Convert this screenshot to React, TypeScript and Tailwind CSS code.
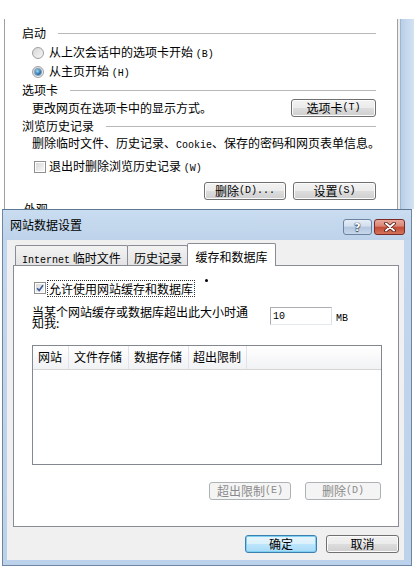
import type { ReactNode } from "react";

function M({ children }: { children: ReactNode }) {
  return <span className="font-['Liberation_Mono',monospace] text-[10px]">{children}</span>;
}

function Btn({
  children,
  className = "",
  disabled,
  primary,
}: {
  children: ReactNode;
  className?: string;
  disabled?: boolean;
  primary?: boolean;
}) {
  let look =
    "border-[#707070] bg-[linear-gradient(to_bottom,#f2f2f2_0%,#ebebeb_50%,#dddddd_50%,#cfcfcf_100%)] shadow-[inset_0_0_0_1px_#fbfbfb] text-black";
  if (disabled) look = "border-[#adb2b5] bg-[#f4f4f4] text-[#8a8a8a]";
  if (primary)
    look =
      "border-[#3c7fb1] bg-[linear-gradient(to_bottom,#e8f5fc_0%,#d9f0fc_50%,#bee6fd_50%,#a7d9f5_100%)] shadow-[inset_0_0_0_1px_#7ed0f2] text-black";
  return (
    <div
      className={`h-[18px] flex items-center justify-center rounded-[3px] border leading-none ${look} ${className}`}
    >
      {children}
    </div>
  );
}

function Radio({ checked }: { checked?: boolean }) {
  return (
    <span className="w-[12px] h-[12px] rounded-full border border-[#a0a0a0] bg-[linear-gradient(to_bottom_right,#d6d6d6,#f6f6f6)] flex items-center justify-center shrink-0">
      {checked && (
        <span className="w-[6px] h-[6px] rounded-full bg-[radial-gradient(circle_at_40%_35%,#a6dcf7,#2a6fa6_60%,#1c4a78)] shadow-[0_0_0_1px_#7da2c6]" />
      )}
    </span>
  );
}

function Check({ checked }: { checked?: boolean }) {
  return (
    <span className="w-[12px] h-[12px] border border-[#8f8f8f] bg-white p-[1px] shrink-0">
      <span className="block w-full h-full bg-[linear-gradient(to_bottom_right,#d9d9d9,#f7f7f7)] relative">
        {checked && (
          <svg viewBox="0 0 8 8" className="absolute inset-0 w-full h-full">
            <path d="M1 4.2 L3.2 6.4 L7 1.2" stroke="#3a5a9c" strokeWidth="1.6" fill="none" />
          </svg>
        )}
      </span>
    </span>
  );
}

function Group({ title }: { title: string }) {
  return (
    <div className="h-[18px] flex items-center gap-[12px]">
      <span className="leading-[18px] whitespace-nowrap">{title}</span>
      <span className="flex-1 h-px bg-[#b8b8b8]" />
    </div>
  );
}

export default function App() {
  return (
    <div className="w-[414px] h-[568px] overflow-hidden bg-white text-[12px] text-black font-['Noto_Sans_CJK_SC',sans-serif]">
      {/* Internet options window behind */}
      <div className="h-[209px] overflow-hidden pt-[19px] flex">
        <div className="w-[4px]" />
        <div className="w-[394px] border-l border-r border-[#a0a0a0] pl-[17px] pr-[21px] pt-[5px] flex flex-col">
          <Group title="启动" />
          <div className="h-[18px] mt-[2px] pl-[10px] flex items-center gap-[5px]">
            <Radio />
            <span className="leading-[18px] whitespace-nowrap">
              从上次会话中的选项卡开始 <M>(B)</M>
            </span>
          </div>
          <div className="h-[18px] mt-[1px] pl-[10px] flex items-center gap-[5px]">
            <Radio checked />
            <span className="leading-[18px] whitespace-nowrap">
              从主页开始 <M>(H)</M>
            </span>
          </div>
          <Group title="选项卡" />
          <div className="h-[19px] pl-[10px] flex items-center justify-between">
            <span className="leading-[18px] whitespace-nowrap">更改网页在选项卡中的显示方式。</span>
            <Btn className="w-[85px]">
              选项卡 <M>(T)</M>
            </Btn>
          </div>
          <Group title="浏览历史记录" />
          <div className="h-[18px] pl-[10px] flex items-center">
            <span className="leading-[18px] whitespace-nowrap">
              删除临时文件、历史记录、<M>Cookie</M>、保存的密码和网页表单信息。
            </span>
          </div>
          <div className="h-[18px] mt-[5px] pl-[12px] flex items-center gap-[3px]">
            <Check />
            <span className="leading-[18px] whitespace-nowrap">
              退出时删除浏览历史记录 <M>(W)</M>
            </span>
          </div>
          <div className="h-[19px] mt-[5px] flex items-start justify-end gap-[7px]">
            <Btn className="w-[82px] mt-[1px]">
              删除 <M>(D)...</M>
            </Btn>
            <Btn className="w-[83px] mt-[1px]">
              设置 <M>(S)</M>
            </Btn>
          </div>
          <div className="h-[18px] pl-[2px] leading-[18px]">外观</div>
        </div>
        <div className="w-[2px] bg-[#f0f0f0]" />
        <div className="flex-1 bg-[linear-gradient(to_right,#b9cfe7,#d3e2f3)] border-l border-[#9fb6d0]" />
      </div>

      {/* Site data settings dialog */}
      <div className="ml-[2px] w-[410px] h-[357px] border border-[#6f86a2] border-t-[#5f7894] bg-[linear-gradient(to_bottom,#c3d7ee,#bcd2ea)] flex flex-col">
        <div className="h-[30px] flex items-start pl-[7px] pr-[6px] bg-[linear-gradient(to_bottom,#c9dcf0,#bed3ea)]">
          <span className="mt-[6px] leading-[18px] flex-1">网站数据设置</span>
          <div className="mt-[9px] w-[29px] h-[16px] rounded-[3px] border border-[#6d82a0] bg-[linear-gradient(to_bottom,#e6eef7_0%,#d1deed_45%,#b2c6de_50%,#c6d7ea_100%)] flex items-center justify-center">
            <span className="text-[11px] font-bold leading-none text-white font-['DejaVu_Sans',sans-serif] [text-shadow:0_0_1px_#2c3d57,0_0_1px_#2c3d57,0_1px_1px_#2c3d57]">
              ?
            </span>
          </div>
          <div className="mt-[9px] ml-[2px] w-[31px] h-[16px] rounded-[3px] border border-[#7a2a22] bg-[linear-gradient(to_bottom,#e9a99c_0%,#d98575_45%,#c24a35_50%,#d4735a_100%)] flex items-center justify-center">
            <svg viewBox="0 0 14 10" className="w-[14px] h-[10px]">
              <path d="M3 1.5 L11 8.5 M11 1.5 L3 8.5" stroke="#4a1610" strokeWidth="3.6" strokeLinecap="round" />
              <path d="M3 1.5 L11 8.5 M11 1.5 L3 8.5" stroke="#ffffff" strokeWidth="2" strokeLinecap="round" />
            </svg>
          </div>
        </div>

        <div className="ml-[4px] w-[397px] h-[320px] bg-[#f0f0f0] pt-[3px] pl-[6px] pr-[5px] flex flex-col">
          {/* tabs */}
          <div className="h-[23px] mb-[-1px] relative z-10 flex items-end pl-[2px]">
            <div className="w-[113px] h-[20px] mb-[1px] border border-b-0 border-[#898c95] rounded-t-[2px] bg-[linear-gradient(to_bottom,#f3f3f3,#e3e3e3)] pt-[3px] pl-[6px] leading-[18px] whitespace-nowrap">
              <M>Internet</M> 临时文件
            </div>
            <div className="w-[61px] ml-[-1px] h-[20px] mb-[1px] border border-b-0 border-[#898c95] rounded-t-[2px] bg-[linear-gradient(to_bottom,#f3f3f3,#e3e3e3)] pt-[3px] pl-[6px] leading-[18px] whitespace-nowrap">
              历史记录
            </div>
            <div className="w-[89px] ml-[-1px] h-[23px] border border-b-0 border-[#898c95] rounded-t-[2px] bg-white pt-[4px] text-center leading-[18px] whitespace-nowrap">
              缓存和数据库
            </div>
          </div>

          {/* panel */}
          <div className="w-[386px] h-[262px] border border-[#898c95] bg-white flex flex-col pl-[18px] pr-[17px]">
            <div className="h-[18px] mt-[13px] pl-[2px] flex items-center">
              <Check checked />
              <span className="ml-[1px] px-[1px] h-[17px] leading-[16px] border border-dotted border-[#333] whitespace-nowrap">
                允许使用网站缓存和数据库
              </span>
              <span className="ml-[10px] self-start w-[3px] h-[3px] rounded-full bg-black" />
            </div>
            <div className="mt-[9px] flex items-start">
              <div className="w-[218px] leading-[11px]">当某个网站缓存或数据库超出此大小时通知我:</div>
              <div className="ml-[20px] mt-[1px] w-[62px] h-[18px] border border-[#abadb3] border-b-[#e3e9ef] border-r-[#dbdfe6] pl-[2px] flex items-center">
                <M>10</M>
              </div>
              <span className="ml-[4px] mt-[1px] leading-[18px]">
                <M>MB</M>
              </span>
            </div>
            <div className="mt-[17px] w-[350px] h-[120px] border border-[#828790] bg-white">
              <div className="h-[24px] flex border-b border-[#d5d5d5] bg-[linear-gradient(to_bottom,#ffffff,#f1f2f4)] leading-[22px]">
                <div className="w-[36px] pl-[5px] border-r border-[#e2e3ea]">网站</div>
                <div className="w-[60px] pl-[5px] border-r border-[#e2e3ea]">文件存储</div>
                <div className="w-[60px] pl-[5px] border-r border-[#e2e3ea]">数据存储</div>
                <div className="w-[58px] pl-[4px] border-r border-[#e2e3ea]">超出限制</div>
              </div>
            </div>
            <div className="mt-[17px] flex justify-end gap-[14px]">
              <Btn className="w-[82px]" disabled>
                超出限制 <M>(E)</M>
              </Btn>
              <Btn className="w-[76px]" disabled>
                删除 <M>(D)</M>
              </Btn>
            </div>
          </div>

          <div className="mt-[8px] flex justify-end gap-[9px]">
            <Btn className="w-[72px]" primary>
              确定
            </Btn>
            <Btn className="w-[73px]">取消</Btn>
          </div>
        </div>
      </div>
    </div>
  );
}
